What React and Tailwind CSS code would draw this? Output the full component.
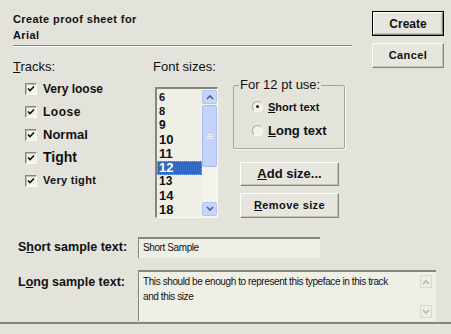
import { useState } from "react";

const raised =
  "border border-t-[#fdfdf9] border-l-[#fdfdf9] border-r-[#85857a] border-b-[#85857a] shadow-[inset_-1px_-1px_0_#c4c4b8]";

function Check({ label, size }) {
  return (
    <div className="flex items-center h-[23px]">
      <span className="w-[12px] h-[12px] flex items-center justify-center bg-[#f4f3ec] border border-t-[#85857a] border-l-[#85857a] border-r-[#fbfbf6] border-b-[#fbfbf6] shadow-[inset_1px_1px_0_#bdbdb2]">
        <svg width="8" height="8" viewBox="0 0 8 8">
          <path d="M1 3.5 L3 5.5 L7 1.5" stroke="#111" strokeWidth="1.6" fill="none" />
        </svg>
      </span>
      <span className={`ml-[6px] font-bold ${size}`}>{label}</span>
    </div>
  );
}

function Radio({ on, children }) {
  return (
    <div className="flex items-center h-[24px] pl-[18px]">
      <span className="w-[11px] h-[11px] rounded-full flex items-center justify-center bg-[#f3f2ea] border border-t-[#a5a598] border-l-[#a5a598] border-r-[#fbfbf6] border-b-[#fbfbf6]">
        {on && <span className="w-[3px] h-[3px] rounded-full bg-[#222]" />}
      </span>
      <span className="ml-[5px] font-bold">{children}</span>
    </div>
  );
}

function Chevron({ up, color = "#4d6185" }) {
  return (
    <svg width="8" height="6" viewBox="0 0 8 6">
      <path
        d={up ? "M1 5 L4 2 L7 5" : "M1 1 L4 4 L7 1"}
        stroke={color}
        strokeWidth="1.6"
        fill="none"
      />
    </svg>
  );
}

export default function App() {
  const [sel] = useState("12");
  const sizes = [
    ["6", "text-[11px]"],
    ["8", "text-[11px]"],
    ["9", "text-[12px]"],
    ["10", "text-[13px]"],
    ["11", "text-[13px]"],
    ["12", "text-[13px]"],
    ["13", "text-[12px]"],
    ["14", "text-[13px]"],
    ["18", "text-[13px]"],
  ];

  return (
    <div className="w-[451px] h-[334px] bg-[#e3e3db] text-[#111] font-['Liberation_Sans',Arial,sans-serif] flex flex-col overflow-hidden">
      <div className="flex h-[226px]">
        <div className="w-[352px] pl-[13px] pt-[11px] flex flex-col">
          <div className="text-[11px] font-bold leading-[16px] tracking-[0.4px]">
            <div>Create proof sheet for</div>
            <div>Arial</div>
          </div>
          <div className="mt-[2px] h-[2px] bg-[#86867a] border-b border-[#fbfbf6]" />

          <div className="flex mt-[12px]">
            <div className="w-[140px] flex flex-col">
              <div className="text-[13px] leading-[16px] font-medium">
                <span className="underline">T</span>racks:
              </div>
              <div className="mt-[2px] pl-[12px] flex flex-col">
                <Check label="Very loose" size="text-[12px]" />
                <Check label="Loose" size="text-[12px] tracking-[0.5px]" />
                <Check label="Normal" size="text-[13px]" />
                <Check label="Tight" size="text-[14px]" />
                <Check label="Very tight" size="text-[11px] tracking-[0.3px]" />
              </div>
            </div>

            <div className="w-[80px] flex flex-col">
              <div className="text-[13px] leading-[16px] font-medium">Font sizes:</div>
              <div className="mt-[12px] ml-[2px] w-[63px] h-[131px] bg-[#f0efe6] border-l-2 border-t-2 border-[#86867a] border-r border-b border-r-[#fbfbf6] border-b-[#fbfbf6] flex">
                <div className="flex-1 flex flex-col pt-[1px]">
                  {sizes.map(([s, cls]) => (
                    <div
                      key={s}
                      className={`h-[14.4px] flex items-center leading-[13px] pl-[2px] font-bold ${cls} ${
                        s === sel
                          ? "bg-[#316ac5] text-white outline-1 outline-dotted outline-[#e0a040] -outline-offset-1"
                          : ""
                      }`}
                    >
                      {s}
                    </div>
                  ))}
                </div>
                <div className="w-[15px] flex flex-col bg-[#f3f3ec] pt-[1px] pb-[1px]">
                  <div className="h-[14px] rounded-[2px] bg-[#c6d6fb] border border-[#b0c4f2] flex items-center justify-center">
                    <Chevron up />
                  </div>
                  <div className="h-[62px] mt-[1px] rounded-[2px] bg-[#c4d3fa] border border-[#a9bdf0] flex flex-col items-center justify-center gap-[1px]">
                    <span className="w-[6px] h-[1px] bg-[#eef2fe]" />
                    <span className="w-[6px] h-[1px] bg-[#eef2fe]" />
                    <span className="w-[6px] h-[1px] bg-[#eef2fe]" />
                  </div>
                  <div className="flex-1" />
                  <div className="h-[14px] rounded-[2px] bg-[#c6d6fb] border border-[#b0c4f2] flex items-center justify-center">
                    <Chevron />
                  </div>
                </div>
              </div>
            </div>

            <div className="w-[112px] flex flex-col">
              <fieldset className="mt-[19px] h-[71px] border border-[#a3a396] rounded-[2px] shadow-[1px_1px_0_#fbfbf6]">
                <legend className="ml-[5px] px-[1px] text-[13px] leading-[14px] font-medium">For 12 pt use:</legend>
                <div className="flex flex-col mt-[2px]">
                  <Radio on>
                    <span className="text-[11px]">
                      <span className="underline">S</span>hort text
                    </span>
                  </Radio>
                  <Radio>
                    <span className="text-[13px]">
                      <span className="underline">L</span>ong text
                    </span>
                  </Radio>
                </div>
              </fieldset>
              <div className={`mt-[13px] ml-[7px] w-[99px] h-[24px] bg-[#e6e6de] flex items-center justify-center text-[13px] font-bold ${raised}`}>
                <span>
                  <span className="underline">A</span>dd size...
                </span>
              </div>
              <div className={`mt-[7px] ml-[7px] w-[99px] h-[25px] bg-[#e6e6de] flex items-center justify-center text-[11px] font-bold tracking-[0.4px] ${raised}`}>
                <span>
                  <span className="underline">R</span>emove size
                </span>
              </div>
            </div>
          </div>
        </div>

        <div className="ml-[20px] pt-[11px] flex flex-col gap-[7px]">
          <div className="w-[72px] h-[25px] border border-black">
            <div className={`h-full flex items-center justify-center text-[12px] font-bold bg-[#e6e6de] ${raised}`}>
              Create
            </div>
          </div>
          <div className={`w-[72px] h-[25px] flex items-center justify-center text-[11px] font-bold tracking-[0.4px] bg-[#e6e6de] ${raised}`}>
            Cancel
          </div>
        </div>
      </div>

      <div className="flex items-center mt-[11px] pl-[18px]">
        <div className="w-[120px] text-[12.5px] font-bold">
          S<span className="underline">h</span>ort sample text:
        </div>
        <div className="w-[182px] h-[21px] bg-[#f0efe6] border-t-2 border-l border-[#86867a] pl-[4px] text-[10px] leading-[17px] tracking-[-0.4px]">
          Short Sample
        </div>
      </div>

      <div className="flex items-start mt-[12px] pl-[18px]">
        <div className="w-[120px] pt-[3px] text-[12.5px] font-bold">
          L<span className="underline">o</span>ng sample text:
        </div>
        <div className="w-[298px] h-[51px] bg-[#f0efe6] border-t-2 border-l border-[#86867a] flex">
          <div className="flex-1 pl-[4px] pt-[2px] text-[10px] leading-[15px] tracking-[-0.4px]">
            This should be enough to represent this typeface in this track
            <br />
            and this size
          </div>
          <div className="w-[16px] flex flex-col justify-between py-[3px]">
            <div className="w-[12px] h-[13px] border border-[#d8d8cc] bg-[#eeede5] flex items-center justify-center">
              <Chevron up color="#b5b5aa" />
            </div>
            <div className="w-[12px] h-[13px] border border-[#d8d8cc] bg-[#eeede5] flex items-center justify-center">
              <Chevron color="#b5b5aa" />
            </div>
          </div>
        </div>
      </div>

      <div className="mt-[1px] h-[2px] bg-[#86867a]" />
    </div>
  );
}
